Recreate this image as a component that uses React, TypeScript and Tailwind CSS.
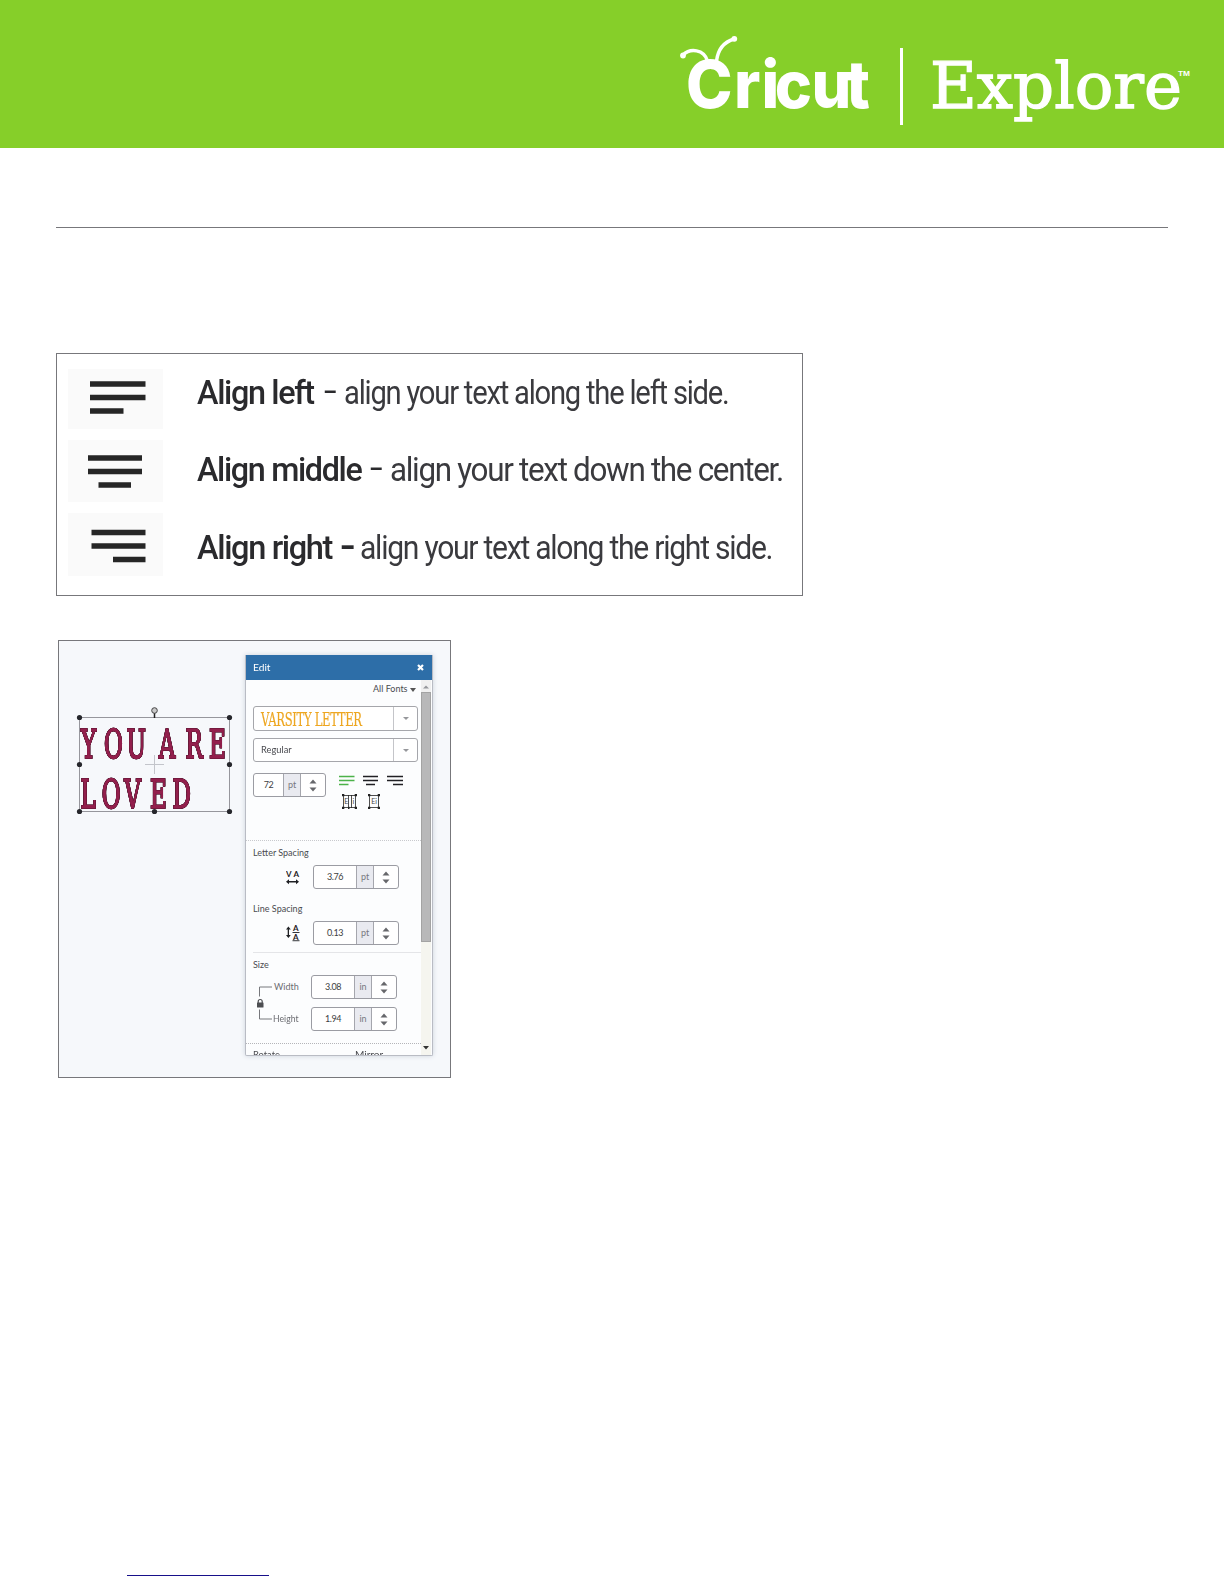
import React, { useLayoutEffect, useRef, useState } from "react";
import clsx from "clsx";

// squeezes its text to the width given by className
function FitText({ className, children }: { className?: string; children: string }) {
  const outer = useRef<HTMLSpanElement>(null);
  const inner = useRef<HTMLSpanElement>(null);
  const [scale, setScale] = useState(1);

  useLayoutEffect(() => {
    if (outer.current && inner.current) {
      setScale(outer.current.clientWidth / inner.current.offsetWidth);
    }
  }, []);

  return (
    <span ref={outer} className={clsx("block shrink-0", className)}>
      <span
        ref={inner}
        className="inline-block whitespace-nowrap origin-left"
        style={{ transform: `scaleX(${scale})` }}
      >
        {children}
      </span>
    </span>
  );
}

function Header() {
  return (
    <header className="h-[148px] bg-[#86cf29] flex justify-end">
      <svg width="564" height="148" viewBox="660 0 564 148" fill="#fff">
        <g fill="none" stroke="#fff" strokeWidth="3.4">
          <path d="M683 55 C690 48 704 49 707.500 61" />
          <path d="M716.500 61 C718 49 724 42 734 39" />
        </g>
        <circle cx="683" cy="55.500" r="2.900" />
        <circle cx="734.300" cy="38.800" r="2.900" />
        <text
          transform="translate(686 108) scale(.95 1)"
          x="0 50.5 79.5 93.5 132 168.5"
          y="0"
          fontSize="66"
          className="font-['Inter'] font-extrabold"
        >
          Cricut
        </text>
        <rect x="900" y="48" width="3" height="77" />
        <text
          x="930"
          y="107.500"
          fontSize="63"
          textLength="252"
          lengthAdjust="spacingAndGlyphs"
          stroke="#fff"
          strokeWidth="1.300"
          className="font-['DejaVu_Serif']"
        >
          Explore
        </text>
        <text
          x="1178"
          y="76"
          fontSize="8"
          textLength="12"
          lengthAdjust="spacingAndGlyphs"
          className="font-['Liberation_Sans'] font-bold"
        >
          TM
        </text>
      </svg>
    </header>
  );
}

function AlignBars({ y, x1, x2, s1, s2, h }: { y: number; x1: number; x2: number; s1: number; s2: number; h: number }) {
  return (
    <svg width="95" height={h} className="bg-[#fafafa] shrink-0" stroke="#262626" strokeWidth="5.4">
      <path d={`M${x1} ${y}H${x2}M${x1} ${y + 13.5}H${x2}M${s1} ${y + 27}H${s2}`} />
    </svg>
  );
}

function AlignHelp() {
  return (
    <section className="ml-[56px] mt-[125px] w-[747px] h-[243px] border border-[#77777b] pl-[11px] pt-[15px] flex flex-col gap-[11px] font-['Roboto'] text-[33.5px] leading-[40px] tracking-[-1.4px] text-[#2a2a2d]">
      <div className="flex h-[60px]">
        <AlignBars h={60} y={15} x1={22} x2={77.500} s1={22} s2={55.500} />
        <div className="flex pt-[4px] pl-[34px]">
          <FitText className="w-[117px] font-medium">Align left</FitText>
          <FitText className="w-[14px] ml-[9px]">–</FitText>
          <FitText className="w-[385px] ml-[7px] text-[#3a3a3e]">align your text along the left side.</FitText>
        </div>
      </div>
      <div className="flex h-[62px]">
        <AlignBars h={62} y={18} x1={20} x2={74} s1={30.500} s2={63} />
        <div className="flex pt-[10px] pl-[34px]">
          <FitText className="w-[164px] font-medium">Align middle</FitText>
          <FitText className="w-[14px] ml-[8px]">–</FitText>
          <FitText className="w-[393px] ml-[7px] text-[#3a3a3e]">align your text down the center.</FitText>
        </div>
      </div>
      <div className="flex h-[63px]">
        <AlignBars h={63} y={19.500} x1={23.500} x2={77.500} s1={45} s2={77.500} />
        <div className="flex pt-[15px] pl-[34px]">
          <FitText className="w-[135px] font-medium">Align right</FitText>
          <FitText className="w-[14px] ml-[8px] font-bold">–</FitText>
          <FitText className="w-[412px] ml-[6px] text-[#3a3a3e]">align your text along the right side.</FitText>
        </div>
      </div>
    </section>
  );
}

function Canvas() {
  const handles = [
    [79.500, 717.500],
    [229.500, 717.500],
    [79.500, 764.500],
    [229.500, 764.500],
    [79.500, 811.500],
    [154.500, 811.500],
    [229.500, 811.500],
  ];
  return (
    <svg width="186" height="436" viewBox="59 641 186 436" className="shrink-0">
      <rect x="79.500" y="717.500" width="150" height="94" fill="none" stroke="#96969c" />
      <path d="M154.500 755v19M145 764.500h19" stroke="#c3c5cb" />
      <g
        fill="#93204d"
        stroke="#93204d"
        strokeWidth="1.600"
        fontSize="39"
        className="font-['DejaVu_Serif'] [filter:drop-shadow(0_0_0.5px_#200814)_drop-shadow(0_0_0.3px_#200814)]"
      >
        <text transform="translate(81 757.500) scale(.59 1)" x="0 39 77 110 132 177 217" y="0">
          YOU ARE
        </text>
        <text transform="translate(80.500 808) scale(.59 1)" x="0 36 74 118 156" y="0">
          LOVED
        </text>
      </g>
      <path d="M154.500 713v5" stroke="#222" strokeWidth="1.500" />
      <circle cx="154.500" cy="710.500" r="2.800" fill="#c9c9c9" stroke="#444" />
      {handles.map(([x, y]) => (
        <circle key={`${x}-${y}`} cx={x} cy={y} r="2.600" fill="#25262b" />
      ))}
    </svg>
  );
}

function Select({ className, children }: { className?: string; children: React.ReactNode }) {
  return (
    <div className={clsx("ml-[7px] w-[165px] flex border border-[#a5a6ab] rounded-[3px] bg-white", className)}>
      <div className="w-[140px] pl-[7px] flex items-center border-r border-[#c4c5c9]">{children}</div>
      <div className="flex-1 flex items-center justify-center">
        <svg width="6" height="3" fill="#96979b">
          <path d="M0 0h6l-3 3z" />
        </svg>
      </div>
    </div>
  );
}

function Spinner({ value, unit, className, wide }: { value: string; unit: string; className?: string; wide?: boolean }) {
  return (
    <div className={clsx("flex h-[24px] border border-[#9b9ca3] rounded-[3px] bg-white text-[9px]", className)}>
      <div
        className={clsx(
          "flex items-center justify-center text-[#3d3e42] tracking-[-0.5px]",
          wide ? "w-[42px]" : "w-[29px]"
        )}
      >
        {value}
      </div>
      <div className="w-[18px] flex items-center justify-center bg-[#e9eaf0] border-x border-[#a5a6ad] text-[#77787f]">
        {unit}
      </div>
      <div className="flex-1 flex items-center justify-center">
        <svg width="8" height="13" fill="#66676b">
          <path d="M.5 4.500L4 .5l3.500 4zM.5 8.500h7l-3.500 4z" />
        </svg>
      </div>
    </div>
  );
}

function TextTools() {
  return (
    <svg width="66" height="36" viewBox="338 774 66 36" className="ml-[12px] mt-px">
      <g strokeWidth="1.400" stroke="#202024">
        <path stroke="#4cb24a" strokeWidth="1.600" d="M339 776.500h15.500M339 780.500h15.500M339 784.500h9.500" />
        <path d="M363 776.500h15M363 780.500h15M366 784.500h9" />
        <path d="M387 776.500h16M387 780.500h16M393 784.500h10" />
      </g>
      <g fill="none" stroke="#222" strokeWidth="0.800">
        <path d="M343.500 796v11M348.500 795v13M351.500 795v13M355.500 796v11M343 795.500h13M343 807.500h13" />
        <path d="M369.500 796v12M378.500 796v12M369 795.500h10M369 807.500h10" />
      </g>
      <g fill="#222">
        <path d="M342 794h2.300v2.300H342zM354.700 794h2.300v2.300h-2.300zM342 806.700h2.300v2.300H342zM348 806.700h1.500v2.300H348zM354.700 806.700h2.300v2.300h-2.300z" />
        <path d="M368 794h2.300v2.300H368zM377.700 794h2.300v2.300h-2.300zM368 806.700h2.300v2.300H368zM377.700 806.700h2.300v2.300h-2.300z" />
      </g>
      <g className="font-['Lato']" fontSize="7" fill="#444">
        <text x="344.300" y="804">E</text>
        <text x="352.600" y="804">i</text>
        <text x="371.200" y="804">Ei</text>
      </g>
    </svg>
  );
}

function LetterSpacingIcon() {
  return (
    <svg width="15" height="16" className="ml-[40px] mt-px font-['Lato'] font-bold" fontSize="8" fill="#1f2024">
      <text x="0" y="7">V</text>
      <text x="7.500" y="7">A</text>
      <path d="M2 11h9v1.500H2z" />
      <path d="M0 11.700l3-2.500v5zM13 11.700l-3-2.500v5z" />
    </svg>
  );
}

function LineSpacingIcon() {
  return (
    <svg width="15" height="18" className="ml-[40px] font-['Lato'] font-bold" fontSize="8" fill="#1f2024">
      <path d="M1.700 4h1.300v8H1.700z" />
      <path d="M2.400 2.500l2.400 3H0zM2.400 14l2.400-3H0z" />
      <text x="7" y="7">A</text>
      <path d="M6.500 8h7v.9h-7z" />
      <text x="7" y="15.500">A</text>
      <path d="M6.500 16.300h7v.9h-7z" />
    </svg>
  );
}

function LockIcon() {
  return (
    <svg width="17" height="46" viewBox="256 979.500 17 46" className="ml-[10px]" fill="none">
      <path d="M272 986.500H259.500V996M259.500 1009v9.500H272" stroke="#77787c" />
      <path d="M258.200 1003v-2a2 2 0 0 1 4 0v2" stroke="#4d4e52" strokeWidth="1.200" />
      <rect x="257" y="1002" width="6.500" height="5" rx="0.500" fill="#4d4e52" />
    </svg>
  );
}

function ScrollBar() {
  return (
    <div className="w-[10px] flex flex-col items-center bg-[#f5f5ef]">
      <svg width="10" height="12" className="bg-[#f0f0f0]" fill="#96979b">
        <path d="M2 8.500L5 5.500l3 3z" />
      </svg>
      <div className="w-[10px] h-[250px] bg-[#b8b8b9] border border-[#a3a3a3]" />
      <svg width="10" height="10" className="mt-auto mb-[2px]" fill="#333">
        <path d="M2 3h6l-3 3.500z" />
      </svg>
    </div>
  );
}

function EditPanel() {
  return (
    <div className="mt-[14px] w-[188px] h-[401px] flex flex-col border border-t-0 border-[#b9bcc4] rounded-b-[2px] bg-[#fcfdfe] shadow-[0_0_5px_#cbd2dc] overflow-hidden font-['Lato'] text-[9px] leading-[12px] text-[#4a4b50]">
      <div className="h-[25px] shrink-0 -mx-px bg-[#2d6ea8] flex items-center justify-between pl-[8px] pr-[9px] text-white">
        <FitText className="w-[17px]">Edit</FitText>
        <svg width="7" height="7" stroke="#fff" strokeWidth="2.200">
          <path d="M1 1l5 5M6 1L1 6" />
        </svg>
      </div>
      <div className="flex h-[375px] overflow-hidden">
        <div className="w-[175px]">
          <div className="flex h-[26px] pt-[3px] justify-end items-start pr-[5px] gap-[2px]">
            <FitText className="w-[35px]">All Fonts</FitText>
            <svg width="6" height="4" className="mt-[5px]" fill="#555">
              <path d="M0 0h6l-3 4z" />
            </svg>
          </div>
          <Select className="h-[25px]">
            <FitText className="w-[101px] pt-[2px] font-['DejaVu_Serif'] text-[18px] leading-[22px] text-[#eda620] tracking-[-0.5px] [-webkit-text-stroke:0.2px_#eda620]">
              VARSITY LETTER
            </FitText>
          </Select>
          <Select className="h-[24px] mt-[7px]">
            <FitText className="w-[31px]">Regular</FitText>
          </Select>
          <div className="flex items-start mt-[11px] ml-[7px] h-[67px]">
            <Spinner value="72" unit="pt" className="w-[73px]" />
            <TextTools />
          </div>
          <div className="border-t border-dotted border-[#c8c9cd]" />
          <FitText className="w-[56px] ml-[7px] mt-[6px] h-[12px]">Letter Spacing</FitText>
          <div className="flex items-center mt-[6px]">
            <LetterSpacingIcon />
            <Spinner wide value="3.76" unit="pt" className="ml-[12px] w-[86px]" />
          </div>
          <FitText className="w-[49px] ml-[7px] mt-[14px] h-[12px]">Line Spacing</FitText>
          <div className="flex items-center mt-[6px]">
            <LineSpacingIcon />
            <Spinner wide value="0.13" unit="pt" className="ml-[12px] w-[86px]" />
          </div>
          <div className="ml-[7px] mt-[7px] border-t border-[#e4e5e8]" />
          <FitText className="w-[16px] ml-[7px] mt-[6px] h-[12px]">Size</FitText>
          <div className="flex mt-[4px] h-[56px] items-center text-[#6b6c71]">
            <LockIcon />
            <div className="flex flex-col gap-[8px]">
              <div className="flex items-center">
                <FitText className="w-[25px] ml-px">Width</FitText>
                <Spinner wide value="3.08" unit="in" className="ml-[12px] w-[86px]" />
              </div>
              <div className="flex items-center">
                <FitText className="w-[26px]">Height</FitText>
                <Spinner wide value="1.94" unit="in" className="ml-[12px] w-[86px]" />
              </div>
            </div>
          </div>
          <div className="mt-[12px] border-t border-dotted border-[#b4b5b9]" />
          <div className="flex mt-[5px] ml-[7px]">
            <FitText className="w-[27px]">Rotate</FitText>
            <FitText className="w-[28px] ml-[75px]">Mirror</FitText>
          </div>
        </div>
        <ScrollBar />
      </div>
    </div>
  );
}

export default function App() {
  return (
    <div className="w-[1224px] h-[1584px] bg-white overflow-hidden">
      <Header />
      <div className="mt-[79px] ml-[56px] w-[1112px] h-px bg-[#77777b]" />
      <AlignHelp />
      <section className="ml-[58px] mt-[44px] w-[393px] h-[438px] flex border border-[#77777b] bg-[#f6f8fb]">
        <Canvas />
        <EditPanel />
      </section>
      <div className="ml-[127px] mt-[497px] w-[142px] h-px bg-[#17108a]" />
    </div>
  );
}
